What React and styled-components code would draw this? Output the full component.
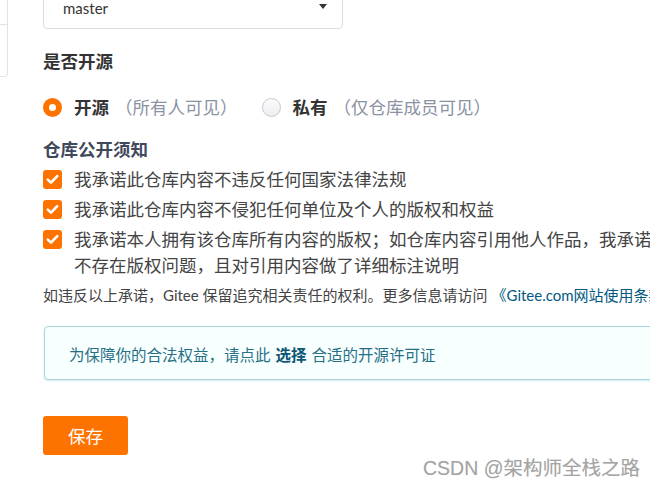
import React from "react";
import styled, { createGlobalStyle } from "styled-components";

const Global = createGlobalStyle`
  html, body { margin: 0; padding: 0; background: #fff; overflow: hidden; }
  body { font-family: "Lato", "Noto Sans CJK SC", sans-serif; }
`;

const Page = styled.div`
  position: relative;
  display: flex;
  align-items: flex-start;
  width: 650px;
  height: 488px;
  overflow: hidden;
`;

const SidePanel = styled.div`
  flex: 0 0 7px;
  height: 76px;
  border-right: 1px solid #e3e3e6;
  border-bottom: 1px solid #e3e3e6;
  border-bottom-right-radius: 4px;
`;

const SideItem = styled.div`
  height: 24px;
  border-bottom: 1px solid #e3e3e6;
`;

const Main = styled.div`
  flex: 0 0 720px;
  margin-left: 35px;
  display: flex;
  flex-direction: column;
  align-items: flex-start;
`;

const Select = styled.div`
  box-sizing: border-box;
  width: 300px;
  height: 42px;
  margin-top: -13px;
  padding: 0 15px 0 19px;
  display: flex;
  align-items: center;
  justify-content: space-between;
  border: 1px solid #dcdce0;
  border-radius: 4px;
  font-family: "Lato", "Noto Sans", sans-serif;
  font-size: 15px;
  color: #333;
`;

const Caret = styled.span`
  width: 0;
  height: 0;
  border-left: 4.5px solid transparent;
  border-right: 4.5px solid transparent;
  border-top: 5px solid #333;
  margin-bottom: 4px;
`;

const FieldTitle = styled.div`
  margin-top: ${(p) => p.$mt}px;
  font-family: "Noto Sans CJK SC", sans-serif;
  font-size: 17.5px;
  line-height: 24px;
  font-weight: 700;
  color: ${(p) => p.$color};
`;

const RadioRow = styled.div`
  margin-top: 22px;
  display: flex;
  align-items: center;
  height: 24px;
`;

const RadioOption = styled.label`
  display: flex;
  align-items: center;
  margin-right: ${(p) => p.$mr}px;
  font-family: "Noto Sans CJK SC", sans-serif;
  font-size: 17.5px;
  line-height: 24px;
`;

const RadioDot = styled.span`
  box-sizing: border-box;
  width: 19px;
  height: 19px;
  border-radius: 50%;
  margin-right: 12px;
  ${(p) =>
    p.$checked
      ? `border: 6px solid #fe7300; background: #fff;`
      : `border: 1px solid #c9c9cf; background: linear-gradient(#fbfbfc, #eeeef1);`}
`;

const RadioLabel = styled.span`
  font-weight: 700;
  color: #333;
`;

const RadioHint = styled.span`
  margin-left: 6px;
  color: #8a91a3;
`;

const CheckList = styled.div`
  margin-top: 5px;
  display: flex;
  flex-direction: column;
  gap: 4px;
  width: 100%;
`;

const CheckItem = styled.div`
  display: flex;
  align-items: flex-start;
  font-family: "Noto Sans CJK SC", sans-serif;
  font-size: 17.5px;
  line-height: 26px;
  color: #444;
`;

const CheckBox = styled.span`
  flex: 0 0 19px;
  height: 19px;
  margin-top: 4px;
  margin-right: 12px;
  border-radius: 3px;
  background: #fe7300;
  display: flex;
  align-items: center;
  justify-content: center;
`;

const Notice = styled.div`
  margin-top: 7px;
  font-family: "Lato", "Noto Sans CJK SC", sans-serif;
  font-size: 15px;
  line-height: 20px;
  color: #444;
  white-space: nowrap;
`;

const Link = styled.a`
  color: #005980;
  text-decoration: none;
  margin-left: 4px;
`;

const InfoBox = styled.div`
  box-sizing: border-box;
  margin-top: 21px;
  margin-left: 1px;
  width: 680px;
  height: 54px;
  padding: 2px 24px 0;
  display: flex;
  align-items: center;
  background: #f8ffff;
  border: 1px solid #a9d5de;
  border-radius: 4px;
  box-shadow: 0 1px 2px rgba(169, 213, 222, 0.5);
  font-family: "Noto Sans CJK SC", sans-serif;
  font-size: 15.5px;
  color: #276f86;
`;

const Strong = styled.b`
  color: #0b5674;
  margin: 0 5px;
`;

const SaveButton = styled.button`
  margin-top: 36px;
  width: 85px;
  height: 39px;
  border: none;
  border-radius: 3px;
  background: #fe7300;
  color: #fff;
  font-family: "Noto Sans CJK SC", sans-serif;
  font-size: 17.5px;
  padding: 0;
  cursor: pointer;
`;

const Watermark = styled.div`
  position: absolute;
  left: 423px;
  top: 456px;
  font-family: "Liberation Sans", "Noto Sans CJK SC", sans-serif;
  font-size: 19.5px;
  line-height: 24px;
  color: #a3a3a3;
  text-shadow: 0 0 1px rgba(0, 0, 0, 0.1);
  white-space: nowrap;
`;

const Check = () => (
  <svg width="13" height="11" viewBox="0 0 13 11">
    <path d="M1.8 5.6 L5 8.6 L11.2 2.2" fill="none" stroke="#fff" strokeWidth="2.6" strokeLinecap="round" strokeLinejoin="round" />
  </svg>
);

const promises = [
  "我承诺此仓库内容不违反任何国家法律法规",
  "我承诺此仓库内容不侵犯任何单位及个人的版权和权益",
  "我承诺本人拥有该仓库所有内容的版权；如仓库内容引用他人作品，我承诺已获得授权，不存在版权问题，且对引用内容做了详细标注说明",
];

export default function App() {
  return (
    <>
      <Global />
      <Page>
        <SidePanel>
          <SideItem />
        </SidePanel>
        <Main>
          <Select>
            <span>master</span>
            <Caret />
          </Select>
          <FieldTitle $mt={20} $color="#333">是否开源</FieldTitle>
          <RadioRow>
            <RadioOption $mr={24}>
              <RadioDot $checked />
              <RadioLabel>开源</RadioLabel>
              <RadioHint>（所有人可见）</RadioHint>
            </RadioOption>
            <RadioOption $mr={0}>
              <RadioDot />
              <RadioLabel>私有</RadioLabel>
              <RadioHint>（仅仓库成员可见）</RadioHint>
            </RadioOption>
          </RadioRow>
          <FieldTitle $mt={18} $color="#40485b">仓库公开须知</FieldTitle>
          <CheckList>
            {promises.map((t) => (
              <CheckItem key={t}>
                <CheckBox>
                  <Check />
                </CheckBox>
                <span>{t}</span>
              </CheckItem>
            ))}
          </CheckList>
          <Notice>
            如违反以上承诺，Gitee 保留追究相关责任的权利。更多信息请访问
            <Link href="#">《Gitee.com网站使用条款》</Link>
          </Notice>
          <InfoBox>
            为保障你的合法权益，请点此<Strong>选择</Strong>合适的开源许可证
          </InfoBox>
          <SaveButton>保存</SaveButton>
        </Main>
        <Watermark>CSDN @架构师全栈之路</Watermark>
      </Page>
    </>
  );
}
